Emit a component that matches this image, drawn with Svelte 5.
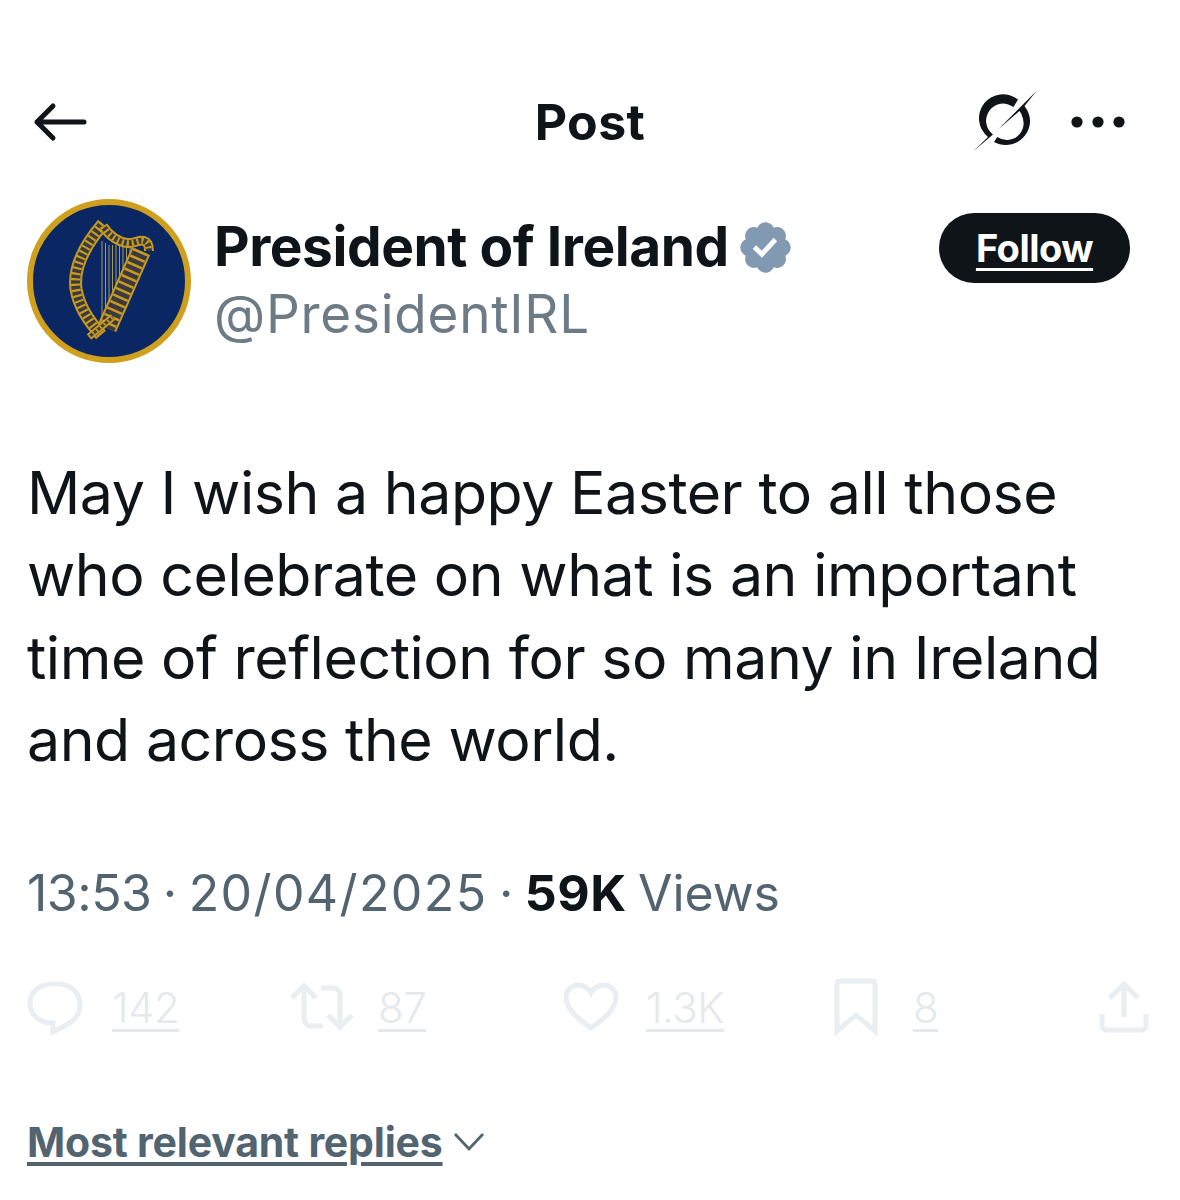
<script>
  const lines = ['May I wish a happy Easter to all those','who celebrate on what is an important','time of reflection for so many in Ireland','and across the world.'];
  const harp = [
    { d: 'M76 25C58 46 46 68 49 90c3 18 13 32 25 46', w: 13, dash: '2.2 3.4' },
    { d: 'M76 27c6 10 16 16 24 17 8 1 12-4 17-2 4 1 5 6 5 10', w: 10, dash: '2 3' },
    { d: 'M114 52 80 129', w: 20, dash: '2.6 4.5' },
    { d: 'M62 138 86 118', w: 7, dash: '1.8 3' }
  ];
  const strings = [
    [75, 42, 128], [78.5, 44, 120], [82, 46, 112], [85.5, 46, 104], [89, 46, 96],
    [92.5, 46, 88], [96, 47, 80], [99.5, 47, 73], [103, 47, 65]
  ];
</script>

<main class="page">
  <header class="nav">
    <svg class="back" viewBox="0 0 54 40" width="54" height="40"><path d="M51 20H4M20 4 4 20l16 16" fill="none" stroke="#0f1419" stroke-width="5" stroke-linecap="round" stroke-linejoin="round"/></svg>
    <h1>Post</h1>
    <div class="nav-right">
      <svg class="grok" viewBox="0 0 66 66" width="66" height="66"><path fill="#0f1419" d="M46 10.5A24 24 0 0 0 16 48L.7 62.7 21 45.5A16.8 16.8 0 0 1 41.5 18ZM64.7 1.7 52.5 17Q58.5 25 58 33A24.3 24.3 0 0 1 22 53L25.3 48A16.8 16.8 0 0 0 50 27Q49.5 24.5 47.5 22L26.3 40.3Z"/></svg>
      <svg class="dots" viewBox="0 0 54 12" width="54" height="12"><circle cx="6" cy="6" r="5.6"/><circle cx="27" cy="6" r="5.6"/><circle cx="48" cy="6" r="5.6"/></svg>
    </div>
  </header>

  <section class="author">
    <svg class="avatar" viewBox="0 0 164 164" width="164" height="164">
      <circle cx="82" cy="82" r="79" fill="#0b2763" stroke="#cfa01e" stroke-width="6"/>
      <g fill="none">
        {#each strings as s}<path d="M{s[0]} {s[1]}V{s[2]}" stroke="#a89a5a" stroke-width="1"/>{/each}
        {#each harp as p}
          <path d={p.d} stroke="#c79a20" stroke-width={p.w}/>
          <path d={p.d} stroke="#3a3a40" stroke-width={p.w - 4}/>
          <path d={p.d} stroke="#c79a20" stroke-width={p.w - 4} stroke-dasharray={p.dash}/>
        {/each}
      </g>
    </svg>
    <div class="who">
      <div class="name-row">
        <span class="name">President of Ireland</span>
        <svg class="badge" viewBox="0 0 22 22" width="59" height="59"><path fill="#829ab1" d="M20.396 11c-.018-.646-.215-1.275-.57-1.816-.354-.54-.852-.972-1.438-1.246.223-.607.27-1.264.14-1.897-.131-.634-.437-1.218-.882-1.687-.47-.445-1.053-.75-1.687-.882-.633-.13-1.29-.083-1.897.14-.273-.587-.704-1.086-1.245-1.44S11.647 1.62 11 1.604c-.646.017-1.273.213-1.813.568s-.969.854-1.24 1.44c-.608-.223-1.267-.272-1.902-.14-.635.13-1.22.436-1.69.882-.445.47-.749 1.055-.878 1.688-.13.633-.08 1.29.144 1.896-.587.274-1.087.705-1.443 1.245-.356.54-.555 1.17-.574 1.817.02.647.218 1.276.574 1.817.356.54.856.972 1.443 1.245-.224.606-.274 1.263-.144 1.896.13.634.433 1.218.877 1.688.47.443 1.054.747 1.687.878.633.132 1.29.084 1.897-.136.274.586.705 1.084 1.246 1.439.54.354 1.17.551 1.816.569.647-.016 1.276-.213 1.817-.567s.972-.854 1.245-1.44c.604.239 1.266.296 1.903.164.636-.132 1.22-.447 1.68-.907.46-.46.776-1.044.908-1.681s.075-1.299-.165-1.903c.586-.274 1.084-.705 1.439-1.246.354-.54.551-1.17.569-1.816z"/><path fill="#fff" d="M9.662 14.85l-3.429-3.428 1.293-1.302 2.072 2.072 4.4-4.794 1.347 1.246z"/></svg>
      </div>
      <div class="handle">@PresidentIRL</div>
    </div>
    <button class="follow">Follow</button>
  </section>

  <article class="body">
    {#each lines as line}<div>{line}</div>{/each}
  </article>

  <div class="meta"><span class="time">13:53</span> · <span class="date">20/04/2025</span> · <b>59K</b> Views</div>

  <div class="actions">
    <div class="act a1">
      <svg viewBox="0 0 56 56" width="56" height="56"><path d="M25 5h6c13 0 22 9 22 21 0 9-5 15-12 19l-15 8v-9h-1C13 44 3 36 3 24 3 13 12 5 25 5Z" fill="none" stroke-width="5"/></svg>
      <u>142</u>
    </div>
    <div class="act a2">
      <svg viewBox="0 0 66 50" width="66" height="50"><path d="M14 4v32c0 5 3 8 8 8h11M2 16 14 4l12 12M31 6h11c5 0 8 3 8 8v30M38 33l12 12 12-12" fill="none" stroke-width="5"/></svg>
      <u>87</u>
    </div>
    <div class="act a3">
      <svg viewBox="0 0 56 50" width="56" height="50"><path d="M28 46C17 38 3 28 3 15 3 8 9 3 15 3c6 0 10 3 13 8 3-5 7-8 13-8 6 0 12 5 12 12 0 13-14 23-25 31Z" fill="none" stroke-width="5"/></svg>
      <u>1.3K</u>
    </div>
    <div class="act a4">
      <svg viewBox="0 0 44 58" width="44" height="58"><path d="M3 53V6c0-2 1-3 3-3h32c2 0 3 1 3 3v47L22 37 3 53Z" fill="none" stroke-width="5"/></svg>
      <u>8</u>
    </div>
    <div class="act a5">
      <svg viewBox="0 0 50 52" width="50" height="52"><path d="M25 36V4M11 17 25 3l14 14M3 33v11c0 3 2 5 5 5h34c3 0 5-2 5-5V33" fill="none" stroke-width="5"/></svg>
    </div>
  </div>

  <div class="sort">
    <u>Most relevant replies</u>
    <svg viewBox="0 0 32 20" width="32" height="20"><path d="M2 2l14 15L30 2" fill="none" stroke="#536471" stroke-width="2.8"/></svg>
  </div>
</main>

<style>
  :global(body) { margin: 0; background: #fff; }
  .page { width: 1180px; height: 1200px; overflow: hidden; box-sizing: border-box; padding: 0 50px 0 27px; font-family: Inter, "Liberation Sans", sans-serif; color: #0f1419; }
  .nav { height: 60px; margin-top: 92px; position: relative; display: flex; align-items: center; justify-content: space-between; padding: 0 5px 0 6px; }
  .nav h1 { position: absolute; left: 23px; right: 0; margin: 0; text-align: center; font-size: 50px; font-weight: 700; letter-spacing: 0.4px; line-height: 60px; }
  .nav-right { display: flex; align-items: center; gap: 33px; }
  .dots { fill: #0f1419; }
  .author { display: flex; margin-top: 47px; align-items: flex-start; }
  .avatar { flex: none; }
  .who { margin-left: 23px; flex: 1; }
  .name-row { display: flex; align-items: center; gap: 7px; height: 60px; margin-top: 17px; }
  .name { font-size: 55px; font-weight: 700; letter-spacing: -0.45px; line-height: 60px; }
  .badge { flex: none; margin-top: 2px; }
  .handle { font-size: 53px; color: #536471; line-height: 60px; letter-spacing: 0.75px; margin-top: 8px; opacity: .85; }
  .follow { flex: none; width: 191px; height: 70px; margin-top: 14px; border: 0; border-radius: 35px; background: #0f1419; color: #fff; font: 700 38px Inter, sans-serif; text-decoration: underline; text-underline-offset: 6px; text-decoration-thickness: 3px; letter-spacing: -0.5px; }
  .body { margin-top: 89px; font-size: 59px; line-height: 82.3px; letter-spacing: -0.45px; color: #0f1419; white-space: nowrap; }
  .meta { margin-top: 82px; font-size: 50px; line-height: 60px; color: #536471; letter-spacing: -0.1px; word-spacing: -2.5px; }
  .time { letter-spacing: -0.5px; }
  .date { letter-spacing: 1.4px; }
  .meta b { color: #0f1419; font-weight: 700; letter-spacing: 0.5px; }
  .actions { position: relative; height: 60px; margin-top: 54px; margin-right: -30px; display: flex; align-items: center; font-size: 42px; font-weight: 300; color: #e4e9ed; letter-spacing: -0.5px; }
  .act { display: flex; align-items: center; }
  .act svg { stroke: #e9eef2; flex: none; }
  .act u { text-underline-offset: 6px; text-decoration-thickness: 3px; }
  .a1 { width: 263px; gap: 29px; }
  .a2 { width: 273px; gap: 22px; }
  .a3 { width: 271px; gap: 27px; }
  .a4 { width: 265px; gap: 35px; }
  .sort { margin-top: 75px; display: flex; align-items: center; gap: 10px; font-size: 41px; font-weight: 700; color: #536471; letter-spacing: -0.2px; line-height: 60px; }
  .sort u { text-underline-offset: 5px; text-decoration-thickness: 4px; }
</style>
